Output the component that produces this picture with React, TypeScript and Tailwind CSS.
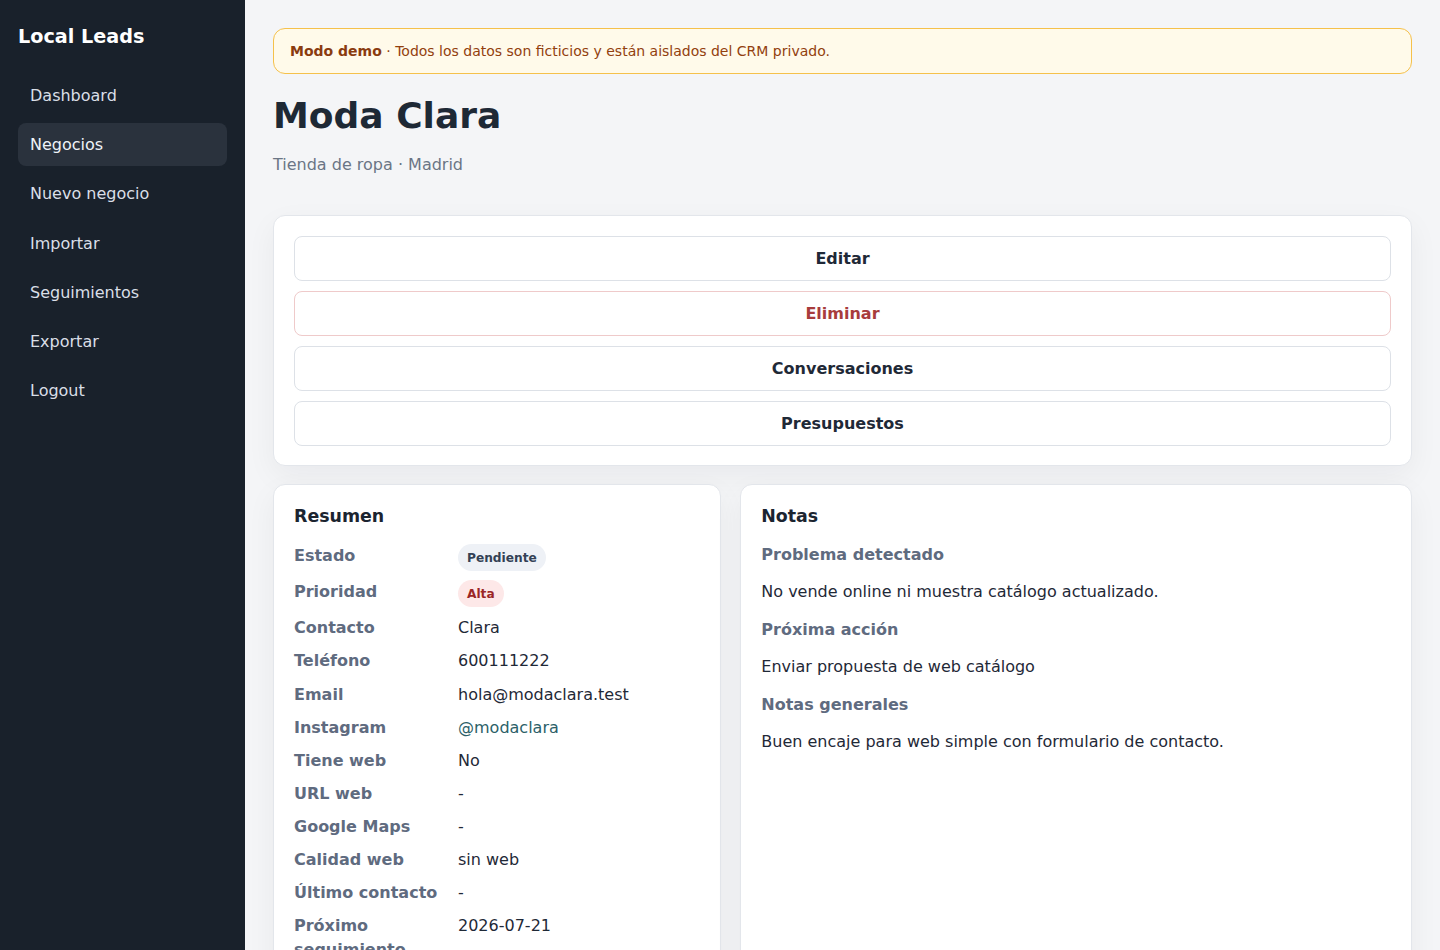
import React from "react";

const navItems = [
  { label: "Dashboard", active: false },
  { label: "Negocios", active: true },
  { label: "Nuevo negocio", active: false },
  { label: "Importar", active: false },
  { label: "Seguimientos", active: false },
  { label: "Exportar", active: false },
  { label: "Logout", active: false },
];

type Row = { label: string; value: React.ReactNode };

const rows: Row[] = [
  {
    label: "Estado",
    value: (
      <span className="inline-flex h-[27px] items-center rounded-full bg-[#eef1f6] px-[9px] text-[12.2px] font-bold text-[#334155]">
        Pendiente
      </span>
    ),
  },
  {
    label: "Prioridad",
    value: (
      <span className="inline-flex h-[27px] items-center rounded-full bg-[#fde8e8] px-[9px] text-[12.2px] font-bold text-[#9b2626]">
        Alta
      </span>
    ),
  },
  { label: "Contacto", value: "Clara" },
  { label: "Teléfono", value: "600111222" },
  { label: "Email", value: "hola@modaclara.test" },
  {
    label: "Instagram",
    value: <a className="text-[#2c5f68]">@modaclara</a>,
  },
  { label: "Tiene web", value: "No" },
  { label: "URL web", value: "-" },
  { label: "Google Maps", value: "-" },
  { label: "Calidad web", value: "sin web" },
  { label: "Último contacto", value: "-" },
  { label: "Próximo seguimiento", value: "2026-07-21" },
];

const notes = [
  { label: "Problema detectado", text: "No vende online ni muestra catálogo actualizado." },
  { label: "Próxima acción", text: "Enviar propuesta de web catálogo" },
  { label: "Notas generales", text: "Buen encaje para web simple con formulario de contacto." },
];

const actions = [
  { label: "Editar", danger: false },
  { label: "Eliminar", danger: true },
  { label: "Conversaciones", danger: false },
  { label: "Presupuestos", danger: false },
];

export default function App() {
  return (
    <div
      className="flex min-h-screen bg-[#f4f5f7] text-[#1f2937]"
      style={{ fontFamily: '"DejaVu Sans", "Liberation Sans", sans-serif' }}
    >
      <aside className="w-[245px] shrink-0 bg-[#19212b] px-[18px] pt-[26px]">
        <div className="text-[19.2px] font-bold leading-[22px] text-white">Local Leads</div>
        <nav className="mt-[26px] flex flex-col gap-[6.2px]">
          {navItems.map((item) => (
            <a
              key={item.label}
              className={
                item.active
                  ? "rounded-lg bg-[#2a323d] px-3 py-[10px] text-base leading-[23px] text-[#eef2f7]"
                  : "rounded-lg px-3 py-[10px] text-base leading-[23px] text-[#d9dfe7]"
              }
            >
              {item.label}
            </a>
          ))}
        </nav>
      </aside>

      <main className="flex-1 px-7 pt-7">
        <div className="rounded-xl border border-[#f5c14b] bg-[#fffaea] px-4 py-3 text-sm leading-5 text-[#92400e]">
          <strong className="font-bold text-[#8a3b0f]">Modo demo</strong> · Todos los datos son ficticios y están aislados del CRM privado.
        </div>

        <h1 className="mt-[20px] text-[36px] font-bold leading-[1.2] text-[#1e2935]">Moda Clara</h1>
        <p className="mt-[16px] text-base leading-6 text-[#6b7585]">Tienda de ropa · Madrid</p>

        <section className="mt-[38px] rounded-xl border border-[#e3e6eb] bg-white px-5 pb-[19px] pt-5 shadow-[0_10px_30px_rgba(15,23,42,0.05)]">
          <div className="flex flex-col gap-[10px]">
            {actions.map((a) => (
              <button
                key={a.label}
                className={
                  a.danger
                    ? "w-full rounded-lg border border-[#efcaca] bg-white py-[10px] text-center text-base font-bold leading-[23px] text-[#a83c3c]"
                    : "w-full rounded-lg border border-[#dde1e7] bg-white py-[10px] text-center text-base font-bold leading-[23px] text-[#1f2937]"
                }
              >
                {a.label}
              </button>
            ))}
          </div>
        </section>

        <div className="mt-[18px] grid grid-cols-[2fr_3fr] gap-[19.5px]">
          <section className="rounded-xl border border-[#e3e6eb] bg-white p-5 shadow-[0_10px_30px_rgba(15,23,42,0.05)]">
            <h2 className="mb-4 text-[17.4px] font-bold leading-[23px] text-[#1b2430]">Resumen</h2>
            <dl className="grid grid-cols-[150px_1fr] gap-x-[14px] gap-y-[9.1px]">
              {rows.map((r) => (
                <React.Fragment key={r.label}>
                  <dt className="self-start text-base font-bold leading-6 text-[#5f6b7f]">{r.label}</dt>
                  <dd className="text-base leading-6 text-[#1f2937]">{r.value}</dd>
                </React.Fragment>
              ))}
            </dl>
          </section>

          <section className="rounded-xl border border-[#e3e6eb] bg-white p-5 shadow-[0_10px_30px_rgba(15,23,42,0.05)]">
            <h2 className="mb-[15px] text-[17.4px] font-bold leading-[23px] text-[#1b2430]">Notas</h2>
            <div className="flex flex-col">
              {notes.map((n) => (
                <React.Fragment key={n.label}>
                  <h3 className="mb-[13px] text-base font-bold leading-6 text-[#5f6b7f]">{n.label}</h3>
                  <p className="mb-[14px] text-base leading-6 text-[#1f2937]">{n.text}</p>
                </React.Fragment>
              ))}
            </div>
          </section>
        </div>
      </main>
    </div>
  );
}
